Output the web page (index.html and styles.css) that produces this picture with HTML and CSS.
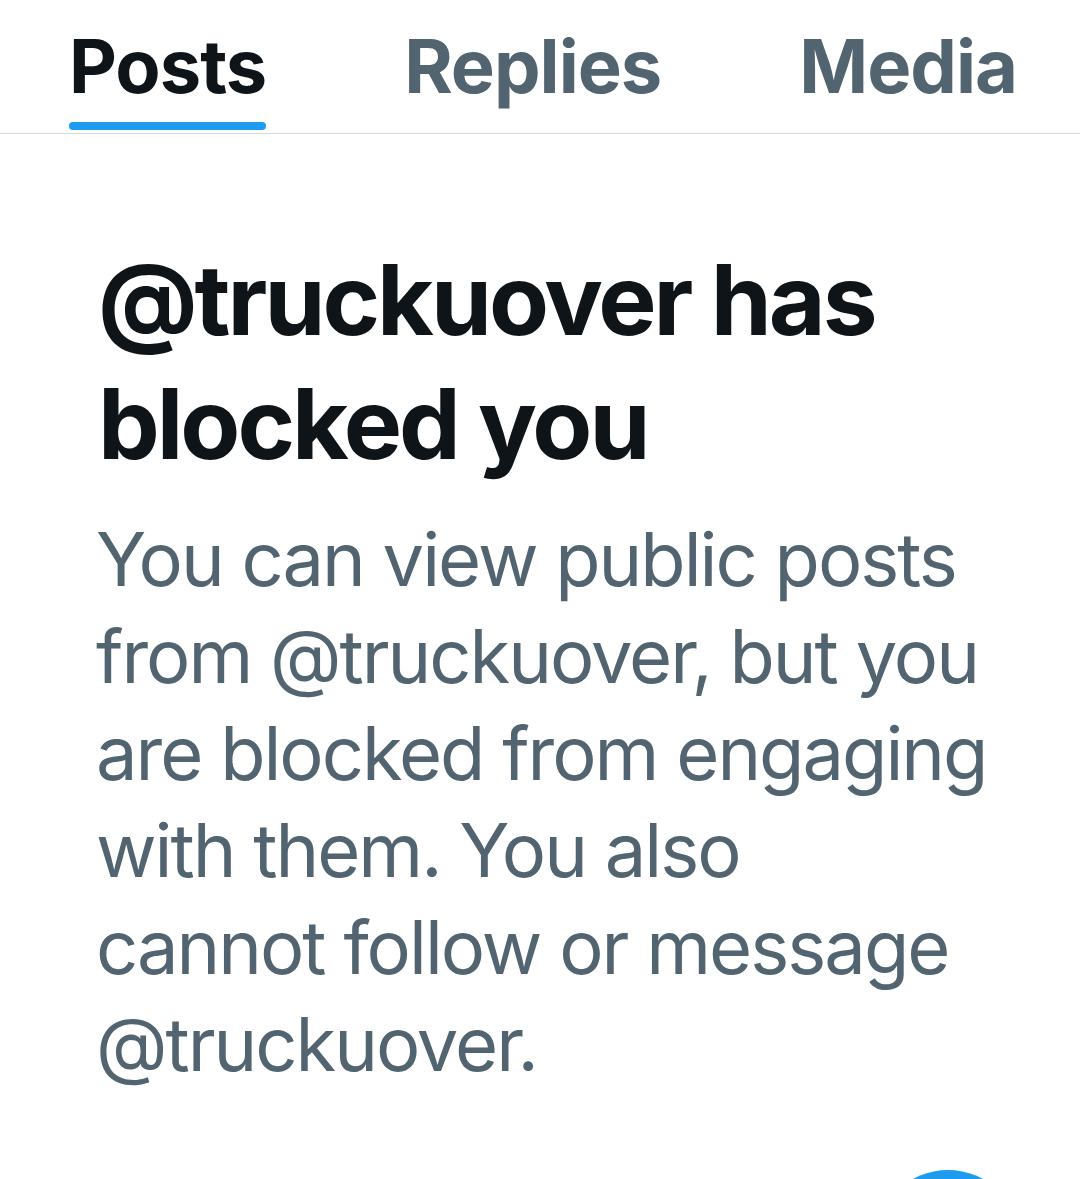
FILE: index.html
```html
<!DOCTYPE html>
<html lang="en">
<head>
<meta charset="utf-8">
<title>Blocked</title>
<link rel="stylesheet" href="styles.css">
</head>
<body>
<div class="page">
  <nav class="tabs">
    <div class="tab active"><span class="label">Posts</span><span class="bar"></span></div>
    <div class="tab"><span class="label">Replies</span><span class="bar"></span></div>
    <div class="tab"><span class="label">Media</span><span class="bar"></span></div>
  </nav>
  <main class="empty">
    <h1 class="title">@truckuover has<br>blocked you</h1>
    <p class="subtitle">You can view public posts<br>from @truckuover, but you<br>are blocked from engaging<br>with them. You also<br>cannot follow or message<br>@truckuover.</p>
  </main>
  <div class="fab"></div>
</div>
</body>
</html>
```
FILE: styles.css
```css
html, body {
  margin: 0;
  padding: 0;
  background: #ffffff;
}
body {
  font-family: Inter, "Noto Sans", "Liberation Sans", sans-serif;
  width: 1080px;
  height: 1179px;
  overflow: hidden;
}
.page {
  position: relative;
  width: 1080px;
  height: 1179px;
  overflow: hidden;
}
.tabs {
  display: flex;
  border-bottom: 1px solid #cfd9de;
}
.tab {
  display: flex;
  flex-direction: column;
  align-items: center;
  padding: 20px 69px 3px;
}
.label {
  display: block;
  font-size: 74px;
  line-height: 92px;
  font-weight: 700;
  color: #536471;
  letter-spacing: -1px;
  white-space: nowrap;
}
.tab.active .label {
  color: #0f1419;
}
.bar {
  display: block;
  align-self: stretch;
  height: 8px;
  margin-top: 10px;
  border-radius: 4px;
  background: transparent;
}
.tab.active .bar {
  background: #1d9bf0;
}
.empty {
  padding: 104px 20px 0 98px;
}
.title {
  margin: 0;
  font-size: 98px;
  line-height: 124px;
  font-weight: 700;
  color: #0f1419;
  letter-spacing: -3px;
  white-space: nowrap;
}
.subtitle {
  margin: 25px 0 0 -2px;
  font-size: 74px;
  line-height: 97px;
  font-weight: 400;
  color: #536471;
  letter-spacing: -2px;
  white-space: nowrap;
}
.fab {
  position: absolute;
  left: 875px;
  top: 1170px;
  width: 146px;
  height: 146px;
  border-radius: 50%;
  background: #1d9bf0;
}
```
